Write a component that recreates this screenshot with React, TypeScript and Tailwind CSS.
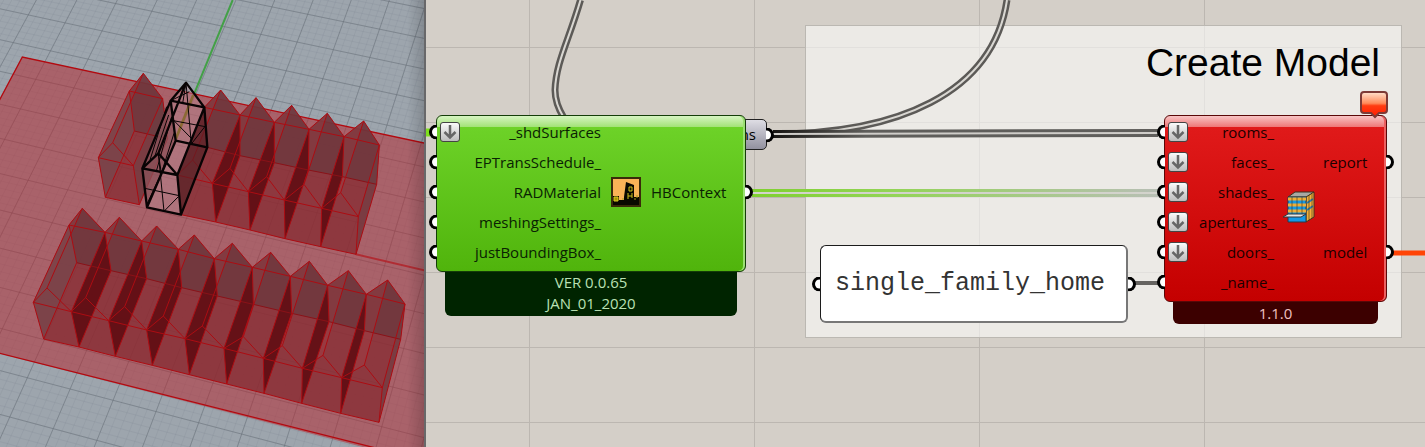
import type { ReactNode } from "react";
import clsx from "clsx";

type Pt = [number, number];

type Row = {
  peaks: Pt[];
  ridges: Pt[];
  backEaves: Pt[];
  backBase: Pt[];
  frontEaves: Pt[];
  frontBase: Pt[];
};

// scene units are a third of a pixel
const upperRow: Row = {
  peaks: [[662, 270], [768, 293], [875, 316], [982, 340], [1091, 363]],
  ridges: [[578, 480], [690, 505], [800, 530], [912, 553], [1022, 578]],
  backEaves: [[613, 322], [720, 345], [823, 367], [927, 388], [1032, 410], [1138, 435]],
  backBase: [[622, 442], [720, 467], [823, 488], [925, 510], [1027, 530], [1130, 553]],
  frontEaves: [[532, 525], [637, 550], [745, 575], [853, 600], [965, 625], [1075, 650]],
  frontBase: [[543, 644], [647, 666], [750, 690], [855, 716], [962, 740], [1068, 763]],
};

const firstHouse: Row = {
  peaks: [[430, 220]],
  ridges: [[338, 428]],
  backEaves: [[388, 273], [488, 296]],
  backBase: [[403, 393], [503, 416]],
  frontEaves: [[295, 473], [400, 497]],
  frontBase: [[316, 592], [418, 614]],
};

const lowerRow: Row = {
  peaks: [[247, 625], [358, 652], [470, 678], [583, 705], [697, 730], [812, 757], [928, 784], [1045, 812], [1163, 840]],
  ridges: [[141, 864], [257, 893], [374, 920], [490, 948], [607, 978], [730, 1010], [847, 1037], [969, 1066], [1093, 1095]],
  backEaves: [[207, 675], [315, 697], [425, 723], [535, 748], [643, 776], [757, 802], [871, 829], [983, 856], [1099, 883], [1215, 912]],
  backBase: [[230, 788], [333, 812], [440, 836], [545, 863], [652, 888], [760, 913], [875, 940], [987, 965], [1093, 992], [1202, 1018]],
  frontEaves: [[100, 907], [214, 935], [326, 962], [440, 990], [555, 1016], [672, 1045], [790, 1075], [907, 1105], [1025, 1133], [1147, 1163]],
  frontBase: [[131, 1017], [237, 1041], [346, 1069], [457, 1096], [568, 1124], [680, 1152], [792, 1180], [905, 1210], [1022, 1240], [1137, 1267]],
};

const poly = (...pts: Pt[]) => pts.map((p) => p.join(",")).join(" ");
const line = (...pts: Pt[]) => "M" + pts.map((p) => p.join(" ")).join("L");

// ground grid: u runs across, v runs towards the viewer
function groundPoint(u: number, v: number): Pt {
  const s = (v - 1) / 10;
  const f = s / (1.17 - 0.17 * s);
  const far: Pt = [85 + 110.5 * u, 45 + 23.9 * u];
  const near: Pt = [82 + 128.6 * (u - 4), 1133 + 33.8 * (u - 4)];
  return [
    Math.round(far[0] + (near[0] - far[0]) * f),
    Math.round(far[1] + (near[1] - far[1]) * f),
  ];
}

function gridPath(step: number) {
  const parts: string[] = [];
  for (let u = -4; u <= 15; u += step) parts.push(line(groundPoint(u, -4), groundPoint(u, 15)));
  for (let v = -4; v <= 15; v += step) parts.push(line(groundPoint(-4, v), groundPoint(15, v)));
  return parts.join("");
}

const minorGrid = gridPath(0.2);
const majorGrid = gridPath(1);

function Houses({ row }: { row: Row }) {
  const { peaks, ridges, backEaves, backBase, frontEaves, frontBase } = row;
  const last = peaks.length;
  return (
    <g strokeLinejoin="round">
      {peaks.map((peak, i) => (
        <g key={i}>
          <polygon
            points={poly(backEaves[i], peak, backEaves[i + 1], backBase[i + 1], frontBase[i + 1], frontBase[i], frontEaves[i])}
            fill="#862b31"
            fillOpacity="0.75"
          />
          <polygon
            points={poly(backEaves[i], peak, backEaves[i + 1], backBase[i + 1], backBase[i])}
            fill="#68393f"
            fillOpacity="0.7"
          />
          <polygon
            points={poly(backEaves[i], peak, ridges[i], frontEaves[i])}
            fill="#c2444d"
            fillOpacity="0.2"
          />
        </g>
      ))}
      <polygon points={poly(backEaves[0], backBase[0], frontBase[0], frontEaves[0])} fill="#75484e" fillOpacity="0.7" />
      <polygon points={poly(backEaves[last], backBase[last], frontBase[last], frontEaves[last])} fill="#6c3f45" fillOpacity="0.6" />
      {peaks.slice(1).map((_, i) => (
        <polygon
          key={i}
          points={poly(backEaves[i + 1], backBase[i + 1], frontBase[i + 1], frontEaves[i + 1])}
          fill="#5f0d12"
          fillOpacity="0.88"
        />
      ))}
      <g fill="none" stroke="#ac0c12" strokeWidth="3">
        <path d={line(...backEaves)} />
        <path d={line(...backBase)} stroke="#8a1218" />
        <path d={line(...frontEaves)} />
        <path d={line(...frontBase)} />
        {backEaves.map((p, i) => (
          <path key={i} d={line(p, backBase[i], frontBase[i], frontEaves[i]) + "Z"} />
        ))}
        {peaks.map((peak, i) => (
          <path
            key={i}
            d={line(backEaves[i], peak, backEaves[i + 1]) + line(frontEaves[i], ridges[i], frontEaves[i + 1]) + line(peak, ridges[i])}
          />
        ))}
      </g>
    </g>
  );
}

function SelectedHouse() {
  return (
    <g strokeLinejoin="round">
      <polygon points="512,302 558,248 613,322 532,525 543,644 441,622 427,505" fill="#b98c94" fillOpacity="0.45" />
      <polygon points="512,302 527,422 441,622 427,505" fill="#7a3c43" fillOpacity="0.5" />
      <polygon points="613,322 622,442 543,644 532,525" fill="#5d1c22" fillOpacity="0.7" />
      <path d="M580 285L527 418" stroke="#8b6a35" strokeWidth="8" />
      <g fill="none" stroke="#080304">
        <path
          strokeWidth="7"
          d="M512 302L558 248L613 322ZM427 505L475 460L532 525ZM427 505L441 622L543 644L532 525M512 302L427 505M558 248L475 460M613 322L532 525M512 302L527 422L441 622M613 322L622 442L543 644M527 422L622 442"
        />
        <path
          strokeWidth="3"
          d="M520 362L616 380M558 248L574 432M520 360L574 415M574 432L616 378M434 565L538 587M475 460L492 634M492 634L535 590M484 520L441 612M500 320L450 480M506 345L464 470M515 350L470 510M522 400L484 520M512 302L568 275M558 248L548 310M475 460L484 520"
        />
      </g>
    </g>
  );
}

function Viewport() {
  return (
    <section aria-label="Perspective viewport" className="relative w-[424px] shrink-0 overflow-hidden bg-[#9da5ad]">
      <svg viewBox="0 0 1272 1341" preserveAspectRatio="xMinYMin slice" className="block h-full w-full">
        <defs>
          <linearGradient id="edge" x1="0" x2="1" y1="0" y2="0">
            <stop offset="0.96" stopColor="#000" stopOpacity="0" />
            <stop offset="1" stopColor="#000" stopOpacity="0.16" />
          </linearGradient>
        </defs>
        <path d={minorGrid} stroke="#6f7780" strokeOpacity="0.13" strokeWidth="3" />
        <path d={majorGrid} stroke="#666d75" strokeOpacity="0.5" strokeWidth="3" />
        <path d="M698 0L583 280" stroke="#43a047" strokeWidth="6" />
        <polygon points="67,171 1290,433 1290,1390 1200,1370 -20,1055 -20,335" fill="#b51f27" fillOpacity="0.5" />
        <path d="M-20 335L67 171L1290 433M-20 1055L1290 1385" fill="none" stroke="#b3090f" strokeWidth="4" />
        <path d="M1068 763L1290 815" stroke="#b3161d" strokeOpacity="0.7" strokeWidth="6" />
        <Houses row={firstHouse} />
        <Houses row={upperRow} />
        <SelectedHouse />
        <Houses row={lowerRow} />
        <rect width="1272" height="1341" fill="url(#edge)" />
      </svg>
    </section>
  );
}

function ContextIcon() {
  return (
    <svg viewBox="0 0 30 30" className="block size-[30px]" aria-hidden="true">
      <rect width="30" height="30" fill="#fab257" />
      <path d="M1 30V19H8V23H13V20L15 5L23 8V20H28V30Z" fill="#0a0800" />
      <path d="M3 20h4v4h-4z" fill="#a89400" stroke="#d8cc22" />
      <path d="M18 10h3v4h-3zM17 16v6M21 16v5M17 19h4" fill="#1c1700" stroke="#cabd1a" />
      <path d="M11 22h2M26 18v3M23 22h2" stroke="#a89c18" />
      <rect x="1" y="1" width="28" height="28" fill="none" stroke="#3a2a0a" strokeWidth="2" />
    </svg>
  );
}

function ModelIcon() {
  return (
    <svg viewBox="0 0 33 33" className="block size-[33px]" aria-hidden="true">
      <path d="M6 6L13 1H32L25 6Z" fill="#a8a9a4" stroke="#3b3320" />
      <path d="M24 6L32 1V26L24 31Z" fill="#f2b03c" stroke="#3b3320" />
      <path d="M6 6H24V31H6Z" fill="#1598e6" stroke="#273a4a" />
      <path d="M6 8H24M6 14H24M6 20H24" stroke="#f0ae38" strokeWidth="3" />
      <path d="M25 12l6-4M25 19l6-4" stroke="#2b7fb4" strokeWidth="2" />
      <path d="M10 6V23M15 6V23M20 6V23M27 4V29M30 3V27" stroke="#3d3018" strokeOpacity="0.6" />
      <path d="M1 26L6 23H24L19 26Z" fill="#e4e6e6" stroke="#33373b" />
    </svg>
  );
}

function FlattenButton({ label }: { label: string }) {
  return (
    <button
      type="button"
      aria-label={`Flatten ${label}`}
      className="flex size-5 shrink-0 items-center justify-center rounded-[3px] border border-[#444] bg-linear-to-b from-[#fafafa] to-[#bdbdbd]"
    >
      <svg viewBox="0 0 16 16" className="size-4" fill="none" strokeWidth="2.5" aria-hidden="true">
        <path d="M8 1V13M2.500 8L8 13.500L13.500 8" stroke="#666" />
      </svg>
    </button>
  );
}

function Grip({ side }: { side: "left" | "right" }) {
  return (
    <span
      className={clsx(
        "absolute top-1/2 h-[15px] w-2 -translate-y-1/2 border-3 border-black bg-white",
        side === "left" ? "right-full rounded-l-full border-r-0" : "left-full rounded-r-full border-l-0"
      )}
    />
  );
}

type NodeInput = { name: string; flatten?: boolean };

function InputList({ items, className }: { items: NodeInput[]; className: string }) {
  return (
    <ul className={className}>
      {items.map((item) => (
        <li key={item.name} className="relative flex h-[30px] items-center pl-[3px]">
          <Grip side="left" />
          {item.flatten ? <FlattenButton label={item.name} /> : null}
          <span className="ml-auto">{item.name}</span>
        </li>
      ))}
    </ul>
  );
}

function Output({ name }: { name: string }) {
  return (
    <div className="relative flex h-[30px] items-center">
      {name}
      <Grip side="right" />
    </div>
  );
}

function VersionBar({ className, children }: { className: string; children: ReactNode }) {
  return <footer className={clsx("mx-[9px] rounded-b-md text-center", className)}>{children}</footer>;
}

const contextInputs: NodeInput[] = [
  { name: "_shdSurfaces", flatten: true },
  { name: "EPTransSchedule_" },
  { name: "RADMaterial" },
  { name: "meshingSettings_" },
  { name: "justBoundingBox_" },
];

const modelInputs: NodeInput[] = [
  { name: "rooms_", flatten: true },
  { name: "faces_", flatten: true },
  { name: "shades_", flatten: true },
  { name: "apertures_", flatten: true },
  { name: "doors_", flatten: true },
  { name: "_name_" },
];

function ContextNode() {
  return (
    <article className="absolute top-[115px] left-[10px] w-[310px] text-[#0a2203]">
      <div className="flex items-center rounded-md border border-[#143d08] bg-[linear-gradient(to_bottom,#d6f5c2_0,#a2e277_11px,#6dd228_11px,#50b40c_100%)] pt-px pb-1 shadow-[inset_-2px_0_0_#9ae072]">
        <InputList items={contextInputs} className="w-[164px]" />
        <div className="ml-2.5">
          <ContextIcon />
        </div>
        <div className="ml-2.5 flex-1">
          <Output name="HBContext" />
        </div>
      </div>
      <VersionBar className="bg-[#002400] pb-[2px] text-[#b9e0b4]">
        <p className="leading-[21px]">VER 0.0.65</p>
        <p className="leading-[21px]">JAN_01_2020</p>
      </VersionBar>
    </article>
  );
}

function ModelNode() {
  return (
    <article className="absolute top-[115px] left-[738px] w-[223px] text-[#1c0000]">
      <div className="flex items-center rounded-md border border-[#5a0808] bg-[linear-gradient(to_bottom,#f8c4c4_0,#ee7777_11px,#e01a1a_11px,#c40000_100%)] pt-px pb-1 shadow-[inset_-2px_0_0_#ec6060]">
        <InputList items={modelInputs} className="w-[109px]" />
        <div className="ml-2">
          <ModelIcon />
        </div>
        <div className="ml-2 flex flex-1 flex-col gap-[60px]">
          <Output name="report" />
          <Output name="model" />
        </div>
      </div>
      <VersionBar className="bg-[#3c0000] text-[#f0c0c0]">
        <p className="leading-[22px]">1.1.0</p>
      </VersionBar>
      <svg viewBox="0 0 28 28" className="absolute -top-6 -right-px size-7" role="img" aria-label="Error">
        <defs>
          <linearGradient id="balloon" x1="0" x2="0" y1="0" y2="1">
            <stop offset="0" stopColor="#ffe3cf" />
            <stop offset="0.45" stopColor="#ff8a5a" />
            <stop offset="0.55" stopColor="#ff3c12" />
            <stop offset="1" stopColor="#ff1c00" />
          </linearGradient>
        </defs>
        <path
          d="M4 1H24Q27 1 27 4V19Q27 22 24 22H19L15 26L11 22H4Q1 22 1 19V4Q1 1 4 1Z"
          fill="url(#balloon)"
          stroke="#7d3a36"
          strokeWidth="2"
        />
      </svg>
    </article>
  );
}

function Wires() {
  return (
    <svg className="absolute inset-0 h-full w-full" fill="none" aria-hidden="true">
      <defs>
        <linearGradient id="shades" gradientUnits="userSpaceOnUse" x1="326" x2="732" y1="0" y2="0">
          <stop offset="0" stopColor="#7fd030" />
          <stop offset="0.35" stopColor="#93d457" />
          <stop offset="1" stopColor="#b8bfb5" />
        </linearGradient>
        <linearGradient id="rooms" gradientUnits="userSpaceOnUse" x1="346" x2="440" y1="0" y2="0">
          <stop offset="0" stopColor="#161412" />
          <stop offset="1" stopColor="#5f5e5b" />
        </linearGradient>
      </defs>
      <g stroke="#5c5a57" strokeWidth="7">
        <path d="M154.500 0C143 40 130 62 129 90C129 102 133 110 138 118" />
        <path d="M347 134C469 134 567 95 581 0" />
      </g>
      <g stroke="#d9d7d2" strokeWidth="2">
        <path d="M154.500 0C143 40 130 62 129 90C129 102 133 110 138 118" />
        <path d="M347 134C469 134 567 95 581 0" />
      </g>
      <path d="M347 134L732 133" stroke="url(#rooms)" strokeWidth="8" />
      <path d="M347 134L732 133" stroke="#cfcdc9" strokeWidth="2" />
      <path d="M326 193H732.500V193.100" stroke="url(#shades)" strokeWidth="8" />
      <path d="M326 193H732" stroke="#d3d3cc" strokeWidth="2" />
      <path d="M0 132.500H4" stroke="#7ee01c" strokeWidth="8" />
      <path d="M709 283H732" stroke="#666461" strokeWidth="4" />
      <path d="M966 253H2400" stroke="#ff4406" strokeWidth="5" />
    </svg>
  );
}

function TextPanel() {
  return (
    <div className="absolute top-[245px] left-[394px] w-[308px]">
      <input
        aria-label="Model name"
        defaultValue="single_family_home"
        className="block h-[78px] w-full rounded-md border border-r-2 border-b-2 border-[#1c1c1c] border-r-[#777] border-b-[#777] bg-white pr-2 pb-px pl-3.5 font-['Liberation_Mono',monospace] text-[25px] text-[#333] outline-none"
      />
      <Grip side="left" />
      <Grip side="right" />
    </div>
  );
}

export default function App() {
  return (
    <main className="flex h-screen overflow-hidden font-['Open_Sans','Noto_Sans',sans-serif] text-[15px]">
      <Viewport />
      <div className="w-[2px] shrink-0 bg-[#68686a]" />
      <section
        aria-label="Definition canvas"
        className="relative min-w-0 flex-1 overflow-hidden bg-[#d4cfc8] bg-[linear-gradient(to_right,#bcb7b1_1px,transparent_1px),linear-gradient(to_bottom,#bcb7b1_1px,transparent_1px)] bg-[size:225px_75px] bg-[position:103px_47px]"
      >
        <div className="absolute top-[25px] left-[379px] h-[313px] w-[597px] border border-[#bbb8b2] bg-[#fcfcfa]/60">
          <h1 className="pt-[14px] pr-[21px] text-right font-['Liberation_Sans',sans-serif] text-[39px] leading-[46px] text-black">
            Create Model
          </h1>
        </div>
        <Wires />
        <div className="absolute top-[119px] left-[290px] w-[51px] rounded-[5px] border border-[#222] bg-linear-to-b from-[#dedde4] to-[#92919f] text-right leading-[29px] text-black">
          <span className="pr-2.5">ns</span>
          <Grip side="right" />
        </div>
        <ContextNode />
        <TextPanel />
        <ModelNode />
      </section>
    </main>
  );
}
